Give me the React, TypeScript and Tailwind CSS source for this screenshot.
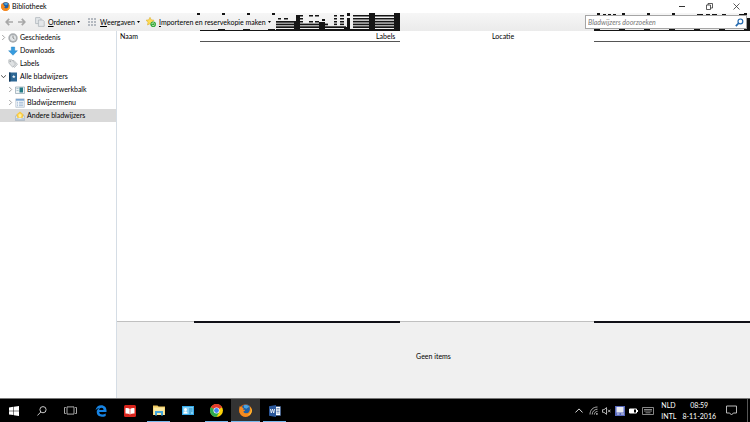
import { ReactNode } from "react";

type IconProps = { className?: string };

type TreeItem = {
  label: string;
  icon: ReactNode;
  nested?: boolean;
  twisty?: "open" | "closed";
  selected?: boolean;
};

const TREE: TreeItem[] = [
  { label: "Geschiedenis", icon: <HistoryIcon />, twisty: "closed" },
  { label: "Downloads", icon: <DownloadIcon /> },
  { label: "Labels", icon: <TagIcon /> },
  { label: "Alle bladwijzers", icon: <BookmarksIcon />, twisty: "open" },
  { label: "Bladwijzerwerkbalk", icon: <ToolbarIcon />, nested: true, twisty: "closed" },
  { label: "Bladwijzermenu", icon: <MenuIcon />, nested: true, twisty: "closed" },
  { label: "Andere bladwijzers", icon: <InboxIcon />, nested: true, selected: true },
];

// [x, y, width, height]
const LEFT_BLOCKS = [
  [197, 0, 3, 2], [222, 0, 3, 2], [247, 0, 3, 2], [272, 0, 3, 2],
  [200, 17, 200, 1], [218, 16, 7, 2], [243, 16, 7, 2], [268, 16, 7, 2],
  [278, 5, 3, 1.5], [284, 5, 4, 1.5],
  [276, 8, 20, 1.7], [276, 10.6, 20, 1.7], [276, 13.3, 24, 1.7], [276, 16, 24, 2],
  [296, 2, 4, 16], [294, 8, 6, 10], [300, 2, 3, 1.5], [300, 5, 3, 1.5],
  [300, 8, 3, 1.5], [300, 10.6, 20, 1.7], [300, 13.3, 46, 1.7], [300, 16, 50, 2],
  [309, 2, 4, 1.5], [315, 2, 4, 1.5], [309, 8, 4, 1.5], [315, 8, 4, 1.5], [322, 6, 3, 2],
  [319, 9, 6, 9], [325, 10.6, 3, 1.7],
  [334, 2, 3, 1.5], [340, 2, 4, 1.5], [334, 5, 3, 1.5], [340, 5, 4, 1.5],
  [334, 8, 3, 1.5], [340, 8, 4, 1.5], [334, 10.6, 3, 1.5], [340, 10.6, 4, 1.5],
  [347, 0, 3, 3], [347, 5, 3, 13], [344, 14, 6, 4],
  [353, 2, 47, 1.5], [353, 5, 47, 1.5], [353, 7.8, 47, 1.7],
  [353, 10.6, 47, 1.7], [353, 13.3, 47, 1.7], [350, 16, 50, 2],
  [369, 0, 6, 18], [394, 0, 6, 18],
];

const RIGHT_BLOCKS = [
  [3, 0, 3, 2], [9, 1, 3, 1], [14, 1, 3, 1], [19, 1, 3, 1], [28, 0, 3, 3],
  [53, 0, 3, 2], [78, 0, 3, 2], [103, 1, 6, 1], [112, 1, 4, 1], [118, 1, 5, 1],
  [128, 1, 4, 1], [145, 1, 5, 1], [150, 0, 3, 2], [153, 5, 3, 13],
  [0, 17, 156, 1], [0, 16, 6, 2], [25, 16, 6, 2], [50, 16, 6, 2],
  [75, 16, 6, 2], [100, 16, 6, 2], [125, 16, 6, 2], [150, 16, 6, 2],
];

export default function App() {
  return (
    <div className="flex min-h-screen flex-col bg-white font-['Lato','Open_Sans',sans-serif] text-[7px] leading-[13px] text-black">
      <TitleBar />
      <Toolbar />
      <main className="flex flex-1">
        <Sidebar />
        <Content />
      </main>
      <Taskbar />
    </div>
  );
}

function TitleBar() {
  return (
    <header className="flex h-[13px] items-center pr-[10px] pl-px">
      <FirefoxIcon className="size-[9px]" />
      <h1 className="ml-0.5 flex-1">Bibliotheek</h1>
      <div className="flex gap-5 text-[#333]">
        <button aria-label="Minimaliseren">
          <svg viewBox="0 0 7 7" className="size-[7px]" stroke="currentColor" fill="none">
            <path d="M0 3.5h6" />
          </svg>
        </button>
        <button aria-label="Vorig formaat">
          <svg viewBox="0 0 7 7" className="size-[7px]" stroke="currentColor" strokeWidth=".8" fill="none">
            <path d="M.5 2h4v4.5h-4zM2 2V.5h4.5V5h-2" />
          </svg>
        </button>
        <button aria-label="Sluiten">
          <svg viewBox="0 0 7 7" className="size-[7px]" stroke="currentColor" strokeWidth=".8" fill="none">
            <path d="m.5.5 6 6m0-6-6 6" />
          </svg>
        </button>
      </div>
    </header>
  );
}

function Toolbar() {
  return (
    <div className="relative flex h-[18px] items-center bg-linear-to-b from-[#f6f6f6] to-[#ebebeb] pr-[3px] pl-[5px]">
      <Blocks blocks={LEFT_BLOCKS} width={400} className="left-0 w-[400px]" />
      <Blocks blocks={RIGHT_BLOCKS} width={156} className="right-0 w-[156px]" />
      <button aria-label="Terug" className="mr-[5px] text-[#a8a8a8]">
        <ArrowIcon />
      </button>
      <button aria-label="Vooruit" className="mr-[9px] -scale-x-100 text-[#a8a8a8]">
        <ArrowIcon />
      </button>
      <MenuButton icon={<PagesIcon />} letter="O" rest="rdenen" className="mr-[7px]" />
      <MenuButton icon={<GridIcon />} letter="W" rest="eergaven" className="mr-[6px]" />
      <MenuButton icon={<StarIcon />} letter="I" rest="mporteren en reservekopie maken" />
      <div className="relative ml-auto flex h-[14px] w-[162px] items-center border border-[#a5a5a5] bg-white px-0.5">
        <input
          type="text"
          id="search"
          aria-label="Bladwijzers doorzoeken"
          placeholder="Bladwijzers doorzoeken"
          className="h-3 min-w-0 flex-1 leading-3 italic outline-none placeholder:text-[#777]"
        />
        <label htmlFor="search">
          <svg viewBox="0 0 9 9" className="size-[9px]" fill="none" stroke="#2469ae">
            <circle cx="5.4" cy="3.4" r="2.4" strokeWidth="1.2" />
            <path d="M3.7 5.2.8 8.1" strokeWidth="1.7" />
          </svg>
        </label>
      </div>
    </div>
  );
}

function MenuButton({
  icon,
  letter,
  rest,
  className = "",
}: {
  icon: ReactNode;
  letter: string;
  rest: string;
  className?: string;
}) {
  return (
    <button className={`relative flex items-center whitespace-nowrap ${className}`}>
      <span className="mr-[3px] size-[10px]">{icon}</span>
      <span>
        <u>{letter}</u>
        {rest}
      </span>
      <svg viewBox="0 0 3 2" className="ml-0.5 h-0.5 w-[3px]">
        <path d="M0 0h3L1.5 2z" />
      </svg>
    </button>
  );
}

function Blocks({
  blocks,
  width,
  className,
}: {
  blocks: number[][];
  width: number;
  className: string;
}) {
  return (
    <svg
      viewBox={`0 0 ${width} 29`}
      className={`pointer-events-none absolute top-0 h-[29px] ${className}`}
      aria-hidden="true"
    >
      {blocks.map(([x, y, w, h], i) => (
        <rect key={i} x={x} y={y} width={w} height={h} fill="#151515" />
      ))}
      <path d={width === 400 ? "M200 28.5h200" : "M0 28.5h156"} stroke="#555" />
    </svg>
  );
}

function Sidebar() {
  return (
    <nav className="w-[117px] shrink-0 border-r border-[#d5dde5]">
      <ul>
        {TREE.map((item) => (
          <TreeRow key={item.label} {...item} />
        ))}
      </ul>
    </nav>
  );
}

function TreeRow({ label, icon, nested, twisty, selected }: TreeItem) {
  return (
    <li className={selected ? "bg-[#d9d9d9]" : ""}>
      <button className={`flex h-[13px] w-full items-center ${nested ? "pl-2" : "pl-px"}`}>
        <span className="mr-0.5 w-[5px]">
          {twisty && (
            <svg viewBox="0 0 5 5" className="size-[5px]" fill="none" stroke={twisty === "open" ? "#333" : "#999"} strokeWidth=".9">
              <path d={twisty === "open" ? "M0 1.2 2.5 3.7 5 1.2" : "M1.2 0 3.7 2.5 1.2 5"} />
            </svg>
          )}
        </span>
        <span className="mr-0.5 size-[10px]">{icon}</span>
        {label}
      </button>
    </li>
  );
}

function Content() {
  return (
    <section className="flex min-w-0 flex-1 flex-col">
      <table className="w-full table-fixed text-left leading-[11px]">
        <thead>
          <tr>
            <th className="w-[256px] pl-[3px] font-normal">Naam</th>
            <th className="w-[116px] pl-[3px] font-normal">Labels</th>
            <th className="pl-[3px] font-normal">Locatie</th>
          </tr>
        </thead>
      </table>
      <div className="flex-1" />
      <div className="relative flex h-[77px] items-center justify-center border-t border-[#c0c0c0] bg-[#f0f0f0] pb-2">
        <span className="absolute -top-px left-[77px] h-0.5 w-[206px] bg-[#111118]" />
        <span className="absolute -top-px right-0 h-0.5 w-[156px] bg-[#111118]" />
        <p>Geen items</p>
      </div>
    </section>
  );
}

function Taskbar() {
  return (
    <footer className="flex h-6 items-center border-t border-[#777] bg-black text-white">
      <TaskButton label="Start" narrow>
        <svg viewBox="0 0 10 10" className="size-[10px]" fill="#fff">
          <path d="M0 1.4 4.4.8v3.9H0zM4.9.7 10 0v4.7H4.9zM0 5.2h4.4v3.9L0 8.5zM4.9 5.2H10V10l-5.1-.8z" />
        </svg>
      </TaskButton>
      <TaskButton label="Zoeken" narrow>
        <svg viewBox="0 0 10 10" className="size-[10px]" fill="none" stroke="#ddd" strokeWidth=".9">
          <circle cx="6" cy="3.7" r="3.1" />
          <path d="M3.8 6 .4 9.5" />
        </svg>
      </TaskButton>
      <TaskButton label="Taakweergave" narrow>
        <svg viewBox="0 0 13 9" className="h-[9px] w-[13px]" fill="none" stroke="#bbb" strokeWidth=".9">
          <path d="M3 .9h7v7.2H3zM1.8 1.5H.5v6h1.3M11.2 1.5h1.3v6h-1.3" />
        </svg>
      </TaskButton>
      <div className="ml-0.5 flex h-full">
        <TaskButton label="Edge">
          <svg viewBox="0 0 12 12" className="size-3" fill="#1683e3">
            <path d="M.5 5.3C1 2 3.2.2 6.2.2c3.4 0 5.3 2.3 5.3 5.4v1.3H4.2c.1 1.7 1.3 2.5 3.1 2.5 1.3 0 2.4-.4 3.4-1v2.5c-1.1.6-2.4.9-3.9.9-3.1 0-5.1-1.8-5.1-4.7 0-2 1-3.4 2.7-4.2C2.7 3.2 1.5 4 .5 5.3zM4.2 4.9h4.3c0-1.3-.7-2.1-2-2.1-1.3 0-2.1.8-2.3 2.1z" />
          </svg>
        </TaskButton>
        <TaskButton label="Lezer">
          <svg viewBox="0 0 12 12" className="size-3">
            <rect width="12" height="12" rx="1.5" fill="#d9251d" />
            <path d="M1.5 3.2c1.8-.3 3.3 0 4.5.9 1.2-.9 2.7-1.2 4.5-.9v5.4c-1.8-.2-3.3.1-4.5.9-1.2-.8-2.7-1.1-4.5-.9z" fill="#fff" />
            <path d="M6 4.1v5.4" stroke="#d9251d" strokeWidth=".6" />
          </svg>
        </TaskButton>
        <TaskButton label="Verkenner" running>
          <svg viewBox="0 0 12 11" className="h-[11px] w-3">
            <path d="M0 .5h4.5l1 1H12V10H0z" fill="#efc75e" />
            <path d="M.5 2.5h11V10H.5z" fill="#fbe9a0" />
            <path d="M2 10.5V6h8v4.5H8V8H4v2.5z" fill="#42a5dc" />
          </svg>
        </TaskButton>
        <TaskButton label="Configuratie">
          <svg viewBox="0 0 12 9" className="h-[9px] w-3">
            <rect width="12" height="9" fill="#36a9e8" />
            <path d="M1 1h10v7H1z" fill="#7fd0f7" />
            <circle cx="3.5" cy="3.5" r="1.5" fill="#fff" />
            <path d="M1.5 7.5c0-3 4-3 4 0z" fill="#fff" />
            <path d="M7 3h3.5M7 5h3.5M7 7h2" stroke="#1474ad" strokeWidth=".8" />
          </svg>
        </TaskButton>
        <TaskButton label="Chrome" running>
          <svg viewBox="0 0 12 12" className="size-[13px]">
            <circle cx="6" cy="6" r="6" fill="#fcd209" />
            <path d="M6 6 .8 3A6 6 0 0 1 11.2 3z" fill="#e33b2e" />
            <path d="M6 6 .8 3A6 6 0 0 0 6 12l2.6-4.5z" fill="#2da94f" />
            <circle cx="6" cy="6" r="2.8" fill="#fff" />
            <circle cx="6" cy="6" r="2.2" fill="#4285f4" />
          </svg>
        </TaskButton>
        <TaskButton label="Firefox" running active>
          <FirefoxIcon className="size-[13px]" />
        </TaskButton>
        <TaskButton label="Word" running>
          <svg viewBox="0 0 12 12" className="size-3">
            <path d="M6 1.5h5.5v9H6z" fill="#fff" stroke="#2b579a" strokeWidth=".6" />
            <path d="M7.5 3.5h3M7.5 5h3M7.5 6.5h3M7.5 8h3" stroke="#2b579a" strokeWidth=".6" />
            <path d="M0 1.3 7 0v12l-7-1.3z" fill="#2b579a" />
            <path d="m1.4 4 .9 4 1.2-4 1.2 4 .9-4" fill="none" stroke="#fff" strokeWidth=".8" />
          </svg>
        </TaskButton>
      </div>
      <Tray />
    </footer>
  );
}

function TaskButton({
  label,
  children,
  narrow,
  running,
  active,
}: {
  label: string;
  children: ReactNode;
  narrow?: boolean;
  running?: boolean;
  active?: boolean;
}) {
  return (
    <button
      aria-label={label}
      className={`relative flex h-full items-center justify-center ${narrow ? "w-7" : "w-[29px]"} ${active ? "bg-[#333]" : ""}`}
    >
      {children}
      {running && (
        <span className={`absolute bottom-0 h-px bg-[#76b9ed] ${active ? "inset-x-0" : "inset-x-[3px]"}`} />
      )}
    </button>
  );
}

function Tray() {
  return (
    <div className="ml-auto flex h-full items-center">
      <div className="flex items-center gap-1">
        <svg viewBox="0 0 8 5" className="mr-0.5 h-[5px] w-2" fill="none" stroke="#ddd">
          <path d="M.4 4.5 4 .9l3.6 3.6" />
        </svg>
        <svg viewBox="0 0 9 9" className="size-[9px]" fill="none" stroke="#bbb" strokeWidth=".9">
          <path d="M1 8.5C1 4 4 1 8.5 1M3.2 8.5c0-3 2.3-5.3 5.3-5.3M5.4 8.5c0-1.8 1.3-3.1 3.1-3.1" />
          <circle cx="7.9" cy="7.9" r=".5" fill="#fff" />
        </svg>
        <svg viewBox="0 0 9 8" className="h-2 w-[9px]" fill="none" stroke="#ddd" strokeWidth=".8">
          <path d="M.5 2.7H2L4.5.6v6.8L2 5.3H.5zM6 2.7l2.5 2.6M8.5 2.7 6 5.3" />
        </svg>
        <svg viewBox="0 0 10 10" className="size-[10px]">
          <rect width="10" height="10" fill="#5869bd" />
          <path d="M1.5 1h7v5.5h-7z" fill="#e6e9f2" />
          <path d="M2 8h2.5M6 8h3" stroke="#d7dcf0" />
        </svg>
        <svg viewBox="0 0 9 6" className="h-1.5 w-[9px]">
          <path d="M.5 1h7v4h-7z" fill="none" stroke="#fff" />
          <path d="M1 1h4v4H1zM8 2h1v2H8z" fill="#fff" />
        </svg>
        <svg viewBox="0 0 12 8" className="h-2 w-3" fill="none" stroke="#aaa" strokeWidth=".8">
          <path d="M.5.5h11v7H.5zM2 2.5h8M2 4h8M3.5 5.8h5" />
        </svg>
      </div>
      <div className="ml-[7px] leading-[11px]">
        <p>NLD</p>
        <p>INTL</p>
      </div>
      <time className="ml-1.5 text-center leading-[11px]" dateTime="2016-11-08T08:59">
        <span className="block">08:59</span>
        <span className="block">8-11-2016</span>
      </time>
      <button aria-label="Meldingen" className="mx-[10px]">
        <svg viewBox="0 0 11 11" className="size-[11px]" fill="none" stroke="#ccc" strokeWidth=".9">
          <path d="M.5 1h10v7H7.3L5.5 10 3.7 8H.5z" />
        </svg>
      </button>
      <span className="mr-0.5 h-full w-px bg-[#555]" />
    </div>
  );
}

function FirefoxIcon({ className = "" }: IconProps) {
  return (
    <svg viewBox="0 0 14 14" className={className}>
      <circle cx="7" cy="7" r="6.8" fill="#e66000" />
      <circle cx="7.6" cy="5.5" r="5" fill="#1d5fa8" />
      <path d="M5 1.5c2-1 5-.5 6 1.5L8 5 5.5 4z" fill="#4ba3de" />
      <path d="M1 2c.3 1 .8 1.3 1.8 1.3L5 4.5 4.3 6l2.2.5C6.5 8 5 7.6 4.7 8.3c1.5 2.7 6 2.3 6.8-1.3.5-2 .2-3.5-.7-4.8 4 2.3 3.8 8 .2 10.5-4 2.7-9 .7-10.4-3.5C0 6.500.2 4 1 2z" fill="#f58a1f" />
      <path d="M12 3.5c2 3.5.5 7.5-3 8.5 2.8.3 4.7-2 4.7-5 0-1.5-.7-2.7-1.7-3.5z" fill="#ffd23c" />
    </svg>
  );
}

function ArrowIcon() {
  return (
    <svg viewBox="0 0 8 8" className="size-2" fill="none" stroke="currentColor" strokeWidth="1.7">
      <path d="M4.2.8 1.2 4l3 3.2M1.5 4H8" />
    </svg>
  );
}

function PagesIcon() {
  return (
    <svg viewBox="0 0 10 10" className="size-[10px]" fill="#e4e7ea" stroke="#a9b0b6" strokeWidth=".7">
      <path d="M.6.6H5l1 1v5H.6z" />
      <path d="M3.4 3h4.4l1.4 1.4v5H3.4z" />
    </svg>
  );
}

function GridIcon() {
  return (
    <svg viewBox="0 0 10 10" className="size-[10px]" fill="#b4b9c0">
      <path d="M1 1h2v2H1zM4 1h2v2H4zM7 1h2v2H7zM1 4h2v2H1zM4 4h2v2H4zM7 4h2v2H7zM1 7h2v2H1zM4 7h2v2H4zM7 7h2v2H7z" />
    </svg>
  );
}

function StarIcon() {
  return (
    <svg viewBox="0 0 10 10" className="size-[10px]">
      <path d="m4 .3 1.2 2.5 2.8.4-2 2 .5 2.8L4 6.7 1.5 8 2 5.2 0 3.2l2.8-.4z" fill="#ffdc55" stroke="#d5a521" strokeWidth=".5" />
      <circle cx="7.2" cy="7.2" r="2.8" fill="#32a836" />
      <path d="M5.7 7c.4-1.5 2.1-1.5 2.8-.4M8.7 7.5c-.4 1.4-2.1 1.4-2.8.3" fill="none" stroke="#fff" strokeWidth=".7" />
    </svg>
  );
}

function HistoryIcon() {
  return (
    <svg viewBox="0 0 10 10" className="size-[10px]">
      <circle cx="5" cy="5" r="4.7" fill="#a9adb0" />
      <circle cx="5" cy="5" r="3" fill="#e1e4e6" />
      <path d="M5 2.5V5l1.5 1" fill="none" stroke="#777" strokeWidth=".8" />
    </svg>
  );
}

function DownloadIcon() {
  return (
    <svg viewBox="0 0 10 10" className="size-[10px]">
      <path d="M3.3 1h3.4v3.7h2.7L5 9.3.6 4.7h2.7z" fill="#369cdf" stroke="#1c76b8" strokeWidth=".4" />
    </svg>
  );
}

function TagIcon() {
  return (
    <svg viewBox="0 0 10 10" className="size-[10px]" fill="#dfe2e4" stroke="#a2a8ad" strokeWidth=".6">
      <path d="M3 1.5h3l3.5 3.8-3 3.2L3 4.8z" />
      <path d="M.8.8h3L7.5 5 4.7 8.3.8 4z" />
      <circle cx="2.3" cy="2.3" r=".5" fill="#888" />
    </svg>
  );
}

function BookmarksIcon() {
  return (
    <svg viewBox="0 0 10 10" className="size-[10px]">
      <path d="M1 .5h8v9H1z" fill="#2d6794" />
      <path d="M1 .5h1.5v9H1z" fill="#173c5e" />
      <path d="m5.8 2.8.5 1.1 1.2.2-.9.9.2 1.2-1-.6-1.1.6.2-1.2-.8-.9 1.2-.2z" fill="#e8f3fb" />
    </svg>
  );
}

function ToolbarIcon() {
  return (
    <svg viewBox="0 0 10 10" className="size-[10px]">
      <path d="M.5 2h9v6.5h-9z" fill="#eef3f5" stroke="#91a4af" strokeWidth=".7" />
      <path d="M4.5 2.5H8v5H4.5z" fill="#247b86" />
      <path d="M1.5 3.5h2M1.5 5.5h2" stroke="#9bb9c8" strokeWidth=".8" />
    </svg>
  );
}

function MenuIcon() {
  return (
    <svg viewBox="0 0 10 10" className="size-[10px]">
      <path d="M.8.8h8.5v8.5H.8z" fill="#f3f7fb" stroke="#9eafc0" strokeWidth=".6" />
      <path d="M1 1h8v1.7H1z" fill="#7ba5d0" />
      <path d="M2 4.3h1M4 4.3h4.2M2 6h1M4 6h4.2M2 7.7h1M4 7.7h4.2" stroke="#85a4c5" strokeWidth=".7" />
    </svg>
  );
}

function InboxIcon() {
  return (
    <svg viewBox="0 0 10 10" className="size-[10px]">
      <path d="M1.5 4h7l1.2 2.5v2.8H.3V6.5z" fill="#dfe7ef" stroke="#8a9aab" strokeWidth=".6" />
      <path d="M5 .6 8.5 3.5 7.5 7h-5l-1-3.5z" fill="#fac83c" />
      <path d="m5 2 .8 1.5 1.6.2-1.2 1.1.3 1.7h-3l.3-1.7-1.2-1.1 1.6-.2z" fill="#fff0a0" />
      <path d="M.6 7h2.6l.6 1h2.4l.6-1h2.6v2H.6z" fill="#bac9d7" />
    </svg>
  );
}
